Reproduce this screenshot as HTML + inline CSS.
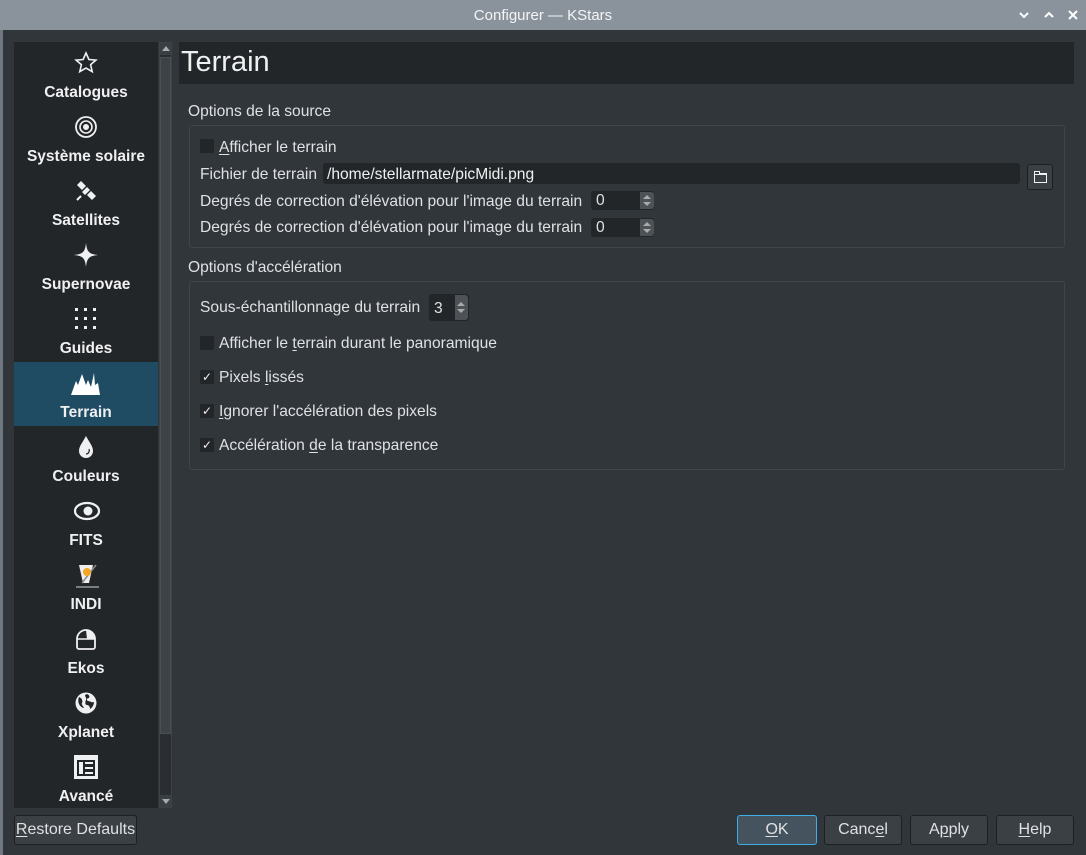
<!DOCTYPE html>
<html><head><meta charset="utf-8"><style>
*{box-sizing:border-box;margin:0;padding:0}
body{width:1086px;height:855px;background:#31363b;font-family:"Liberation Sans",sans-serif;color:#dfe1e3;position:relative;overflow:hidden;font-size:15.6px}
.a{position:absolute}
.title{left:0;top:0;width:1086px;height:30px;background:#8a929b;color:#f4f5f6;text-align:center;line-height:32px;font-size:15px}
.side{left:14px;top:42px;width:144px;height:766px;background:#232629}
.item{position:absolute;left:0;width:144px;height:64px;text-align:center;color:#eff0f1;font-weight:bold;font-size:15.5px}
.item svg{position:absolute;left:60px;top:9px}
.item span{position:absolute;left:0;right:0;top:42px}
.sel{background:#1f4b63}
.sb{left:159px;top:42px;width:13px;height:766px;background:#2a2e32;border:1px solid #3d4247}
.hdr{left:179px;top:42px;width:895px;height:42px;background:#232629;font-size:29px;font-weight:300;padding-left:2px;line-height:40px;color:#eff0f1}
.grp{border:1px solid #40454a;border-radius:3px;background:#31363b}
.lbl{font-size:15.6px;white-space:nowrap}
.cb{width:14px;height:14px;background:#232629;border-radius:1px}
.ck{font-size:12px;text-align:center;line-height:14px;color:#eff0f1}
.inp{background:#232629;border-radius:3px}
.spin{width:14px;background:#4d5257;border-radius:0 3px 3px 0}
.btn{border:1px solid #1d2023;background:#3b4045;border-radius:3px;text-align:center;line-height:28px;height:30px;color:#dfe1e3;font-size:16px}
u{text-decoration:underline;text-underline-offset:2px}
</style></head><body>
<div class="a title">Configurer — KStars
<svg class="a" style="right:57px;top:11px" width="10" height="8"><path d="M1 2l4 4 4-4" stroke="#fff" stroke-width="2" fill="none"/></svg>
<svg class="a" style="right:32px;top:11px" width="10" height="8"><path d="M1 6l4-4 4 4" stroke="#fff" stroke-width="2" fill="none"/></svg>
<svg class="a" style="right:8px;top:10px" width="10" height="10"><path d="M1 1l8 8M9 1l-8 8" stroke="#fff" stroke-width="2"/></svg>
</div>
<div class="a" style="left:0;top:30px;width:3px;height:825px;background:#6f7780"></div>
<div class="a side">
 <div class="item" style="top:0"><svg width="24" height="24" viewBox="0 0 24 24"><path d="M12 2l2.9 6.5 7 .6-5.3 4.6 1.6 6.9L12 17l-6.2 3.6 1.6-6.9L2.1 9.1l7-.6z" fill="none" stroke="#eff0f1" stroke-width="1.6"/></svg><span>Catalogues</span></div>
 <div class="item" style="top:64px"><svg width="24" height="24" viewBox="0 0 24 24"><circle cx="12" cy="12" r="10" fill="none" stroke="#eff0f1" stroke-width="1.8"/><circle cx="12" cy="12" r="6" fill="none" stroke="#eff0f1" stroke-width="1.6"/><circle cx="12" cy="12" r="3" fill="#eff0f1"/></svg><span>Système solaire</span></div>
 <div class="item" style="top:128px"><svg width="24" height="24" viewBox="0 0 24 24"><path d="M3 6l4-4 5 5-4 4zM13 16l4-4 5 5-4 4zM8 13l5-5 3 3-5 5z" fill="#eff0f1"/><path d="M3 21l4-4" stroke="#eff0f1" stroke-width="2"/></svg><span>Satellites</span></div>
 <div class="item" style="top:192px"><svg width="24" height="24" viewBox="0 0 24 24"><path d="M12 0C13 9 15 11 24 12 15 13 13 15 12 24 11 15 9 13 0 12 9 11 11 9 12 0z" fill="#eff0f1"/></svg><span>Supernovae</span></div>
 <div class="item" style="top:256px"><svg width="24" height="24" viewBox="0 0 24 24" fill="#eff0f1"><rect x="1" y="1" width="3" height="3"/><rect x="10" y="1" width="3" height="3"/><rect x="19" y="1" width="3" height="3"/><rect x="1" y="10" width="3" height="3"/><rect x="10" y="10" width="3" height="3"/><rect x="19" y="10" width="3" height="3"/><rect x="1" y="19" width="3" height="3"/><rect x="10" y="19" width="3" height="3"/><rect x="19" y="19" width="3" height="3"/></svg><span>Guides</span></div>
 <div class="item sel" style="top:320px"><svg width="30" height="24" viewBox="0 0 30 24" style="left:57px"><path d="M0 24L5 10 7 14 11 3 15 14 17 9 20 16 23 2 24 14 27 12 29 24z" fill="#fff"/></svg><span>Terrain</span></div>
 <div class="item" style="top:384px"><svg width="24" height="24" viewBox="0 0 24 24"><path d="M12 1C9 7 5 11 5 16a7 7 0 0014 0c0-5-4-9-7-15z" fill="#eff0f1"/><path d="M15 14c1 3-1 5-3 5" stroke="#232629" stroke-width="1.2" fill="none"/></svg><span>Couleurs</span></div>
 <div class="item" style="top:448px"><svg width="26" height="24" viewBox="0 0 26 24"><ellipse cx="13" cy="12" rx="12" ry="8" fill="none" stroke="#eff0f1" stroke-width="2.2"/><circle cx="14" cy="12" r="4.5" fill="#eff0f1"/></svg><span>FITS</span></div>
 <div class="item" style="top:512px"><svg width="26" height="26" viewBox="0 0 26 26"><path d="M5 2h14l-4 18H9z" fill="#eee"/><path d="M22 2L8 20" stroke="#888" stroke-width="1.5"/><circle cx="13" cy="9" r="4" fill="#f5a623"/><path d="M2 24h23" stroke="#999" stroke-width="1.5"/></svg><span>INDI</span></div>
 <div class="item" style="top:576px"><svg width="24" height="24" viewBox="0 0 24 24"><path d="M3 12a9 9 0 0118 0v8a2 2 0 01-2 2H5a2 2 0 01-2-2z" fill="none" stroke="#eff0f1" stroke-width="1.8"/><path d="M3 12h18" stroke="#eff0f1" stroke-width="1.6"/><path d="M12 3a9 9 0 019 9h-8z" fill="#eff0f1"/></svg><span>Ekos</span></div>
 <div class="item" style="top:640px"><svg width="24" height="24" viewBox="0 0 24 24"><circle cx="12" cy="12" r="10.5" fill="#eff0f1"/><path d="M5 6c3 1 4 4 3 6-1 1 1 3 2 5-2 0-4-2-5-4-1-2-1-5 0-7zM13 3c2 1 3 2 2 4-2 0-3 2-1 3 2 0 4 2 6 1 0 3-2 6-4 7 0-2-1-4-3-4-2 0-2-3-1-5 1-2-1-3-1-5z" fill="#232629"/></svg><span>Xplanet</span></div>
 <div class="item" style="top:704px"><svg width="24" height="24" viewBox="0 0 24 24"><rect x="0" y="0" width="24" height="24" fill="#eff0f1"/><rect x="3" y="5" width="18" height="16" fill="#232629"/><rect x="5" y="7" width="4" height="12" fill="#eff0f1"/><rect x="11" y="7" width="8" height="2" fill="#eff0f1"/><rect x="11" y="12" width="8" height="2" fill="#eff0f1"/><rect x="11" y="17" width="8" height="2" fill="#eff0f1"/></svg><span>Avancé</span></div>
</div>
<div class="a sb"><div class="a" style="left:0;top:0;width:11px;height:12px;background:#3a3f44"></div><svg class="a" style="left:2px;top:3px" width="8" height="5"><path d="M0 5L4 0 8 5z" fill="#aaa"/></svg>
<div class="a" style="left:0;top:14px;width:11px;height:677px;background:#3d4247;border:1px solid #4a4f54"></div>
<div class="a" style="left:0;top:752px;width:11px;height:12px;background:#3a3f44"></div><svg class="a" style="left:2px;top:756px" width="8" height="5"><path d="M0 0L4 5 8 0z" fill="#aaa"/></svg></div>
<div class="a hdr">Terrain</div>
<div class="a lbl" style="left:188px;top:103px">Options de la source</div>
<div class="a grp" style="left:189px;top:125px;width:876px;height:123px"></div>
<div class="a cb" style="left:200px;top:139px"></div><div class="a lbl" style="left:219px;top:139px"><u>A</u>fficher le terrain</div>
<div class="a lbl" style="left:200px;top:166px">Fichier de terrain</div>
<div class="a inp" style="left:323px;top:163px;width:697px;height:21px"></div><div class="a lbl" style="left:327px;top:166px;color:#eff0f1">/home/stellarmate/picMidi.png</div>
<div class="a btn" style="left:1027px;top:164px;width:26px;height:26px"><svg class="a" style="left:6px;top:6px" width="13" height="12"><path d="M.5 .5h5v2h7v9H.5zM.5 3.5h12" fill="none" stroke="#eff0f1"/></svg></div>
<div class="a lbl" style="left:200px;top:193px">Degrés de correction d'élévation pour l'image du terrain</div>
<div class="a inp" style="left:591px;top:191px;width:63px;height:19px"></div><div class="a spin" style="left:640px;top:192px;height:17px"><svg class="a" style="left:3px;top:2px" width="8" height="13"><path d="M0 5L4 1 8 5zM0 8L4 12 8 8z" fill="#aaa"/></svg></div><div class="a lbl" style="left:596px;top:192px">0</div>
<div class="a lbl" style="left:200px;top:219px">Degrés de correction d'élévation pour l'image du terrain</div>
<div class="a inp" style="left:591px;top:218px;width:63px;height:19px"></div><div class="a spin" style="left:640px;top:219px;height:17px"><svg class="a" style="left:3px;top:2px" width="8" height="13"><path d="M0 5L4 1 8 5zM0 8L4 12 8 8z" fill="#aaa"/></svg></div><div class="a lbl" style="left:596px;top:219px">0</div>
<div class="a lbl" style="left:188px;top:259px">Options d'accélération</div>
<div class="a grp" style="left:189px;top:281px;width:876px;height:189px"></div>
<div class="a lbl" style="left:200px;top:299px">Sous-échantillonnage du terrain</div>
<div class="a inp" style="left:429px;top:294px;width:40px;height:27px"></div><div class="a spin" style="left:455px;top:295px;height:25px;width:13px"><svg class="a" style="left:2px;top:6px" width="8" height="13"><path d="M0 5L4 1 8 5zM0 8L4 12 8 8z" fill="#aaa"/></svg></div><div class="a lbl" style="left:434px;top:300px">3</div>
<div class="a cb" style="left:200px;top:336px"></div><div class="a lbl" style="left:219px;top:335px">Afficher le <u>t</u>errain durant le panoramique</div>
<div class="a cb ck" style="left:200px;top:370px">✓</div><div class="a lbl" style="left:219px;top:369px">Pixels <u>l</u>issés</div>
<div class="a cb ck" style="left:200px;top:404px">✓</div><div class="a lbl" style="left:219px;top:403px"><u>I</u>gnorer l'accélération des pixels</div>
<div class="a cb ck" style="left:200px;top:438px">✓</div><div class="a lbl" style="left:219px;top:437px">Accélération <u>d</u>e la transparence</div>
<div class="a btn" style="left:14px;top:815px;width:123px"><u>R</u>estore Defaults</div>
<div class="a btn" style="left:737px;top:815px;width:80px;border-color:#3daee9;background:#45535e"><u>O</u>K</div>
<div class="a btn" style="left:824px;top:815px;width:78px">Canc<u>e</u>l</div>
<div class="a btn" style="left:910px;top:815px;width:78px">A<u>p</u>ply</div>
<div class="a btn" style="left:996px;top:815px;width:78px"><u>H</u>elp</div>
</body></html>
